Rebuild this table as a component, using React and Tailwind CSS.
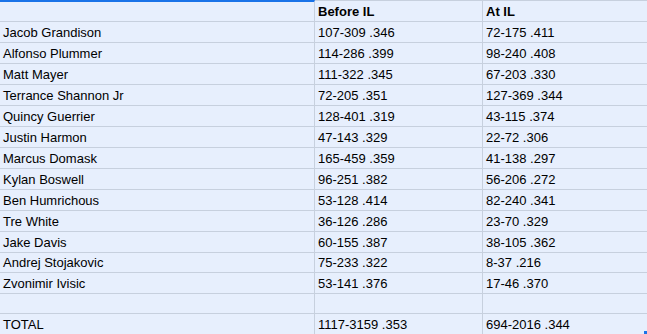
import React from "react";

const rows = [
  ["Jacob Grandison", "107-309 .346", "72-175 .411"],
  ["Alfonso Plummer", "114-286 .399", "98-240 .408"],
  ["Matt Mayer", "111-322 .345", "67-203 .330"],
  ["Terrance Shannon Jr", "72-205 .351", "127-369 .344"],
  ["Quincy Guerrier", "128-401 .319", "43-115 .374"],
  ["Justin Harmon", "47-143 .329", "22-72 .306"],
  ["Marcus Domask", "165-459 .359", "41-138 .297"],
  ["Kylan Boswell", "96-251 .382", "56-206 .272"],
  ["Ben Humrichous", "53-128 .414", "82-240 .341"],
  ["Tre White", "36-126 .286", "23-70 .329"],
  ["Jake Davis", "60-155 .387", "38-105 .362"],
  ["Andrej Stojakovic", "75-233 .322", "8-37 .216", true],
  ["Zvonimir Ivisic", "53-141 .376", "17-46 .370"],
  ["", "", "", true],
  ["TOTAL", "1117-3159 .353", "694-2016 .344"],
];

const cell =
  "flex items-end pl-[3px] pb-[2px] leading-[15px] border-b border-[#c7d0de] whitespace-nowrap overflow-hidden";

export default function App() {
  return (
    <div
      className="relative w-[647px] h-[334px] overflow-hidden bg-[#e7effd] text-[13px] text-black"
      style={{ fontFamily: '"Liberation Sans", Arial, sans-serif' }}
    >
      <div className="grid grid-cols-[315px_168px_1fr]">
        <div className="h-[22px] border-t-2 border-t-[#1a73e8] border-b border-r border-[#c7d0de] border-r-[#c7d0de] border-b-[#c7d0de]" />
        <div className={`${cell} h-[22px] border-t border-t-[#c7d0de] border-r font-bold`}>Before IL</div>
        <div className={`${cell} h-[22px] border-t border-t-[#c7d0de] font-bold`}>At IL</div>
        {rows.map((r, i) => {
          const h = r[3] ? "h-[20px]" : "h-[21px]";
          return (
            <React.Fragment key={i}>
              <div className={`${cell} ${h} border-r`}>{r[0]}</div>
              <div className={`${cell} ${h} border-r`}>{r[1]}</div>
              <div className={`${cell} ${h}`}>{r[2]}</div>
            </React.Fragment>
          );
        })}
      </div>
      <div className="absolute right-0 bottom-0 w-[3px] h-[3px] bg-[#1a73e8]" />
    </div>
  );
}
